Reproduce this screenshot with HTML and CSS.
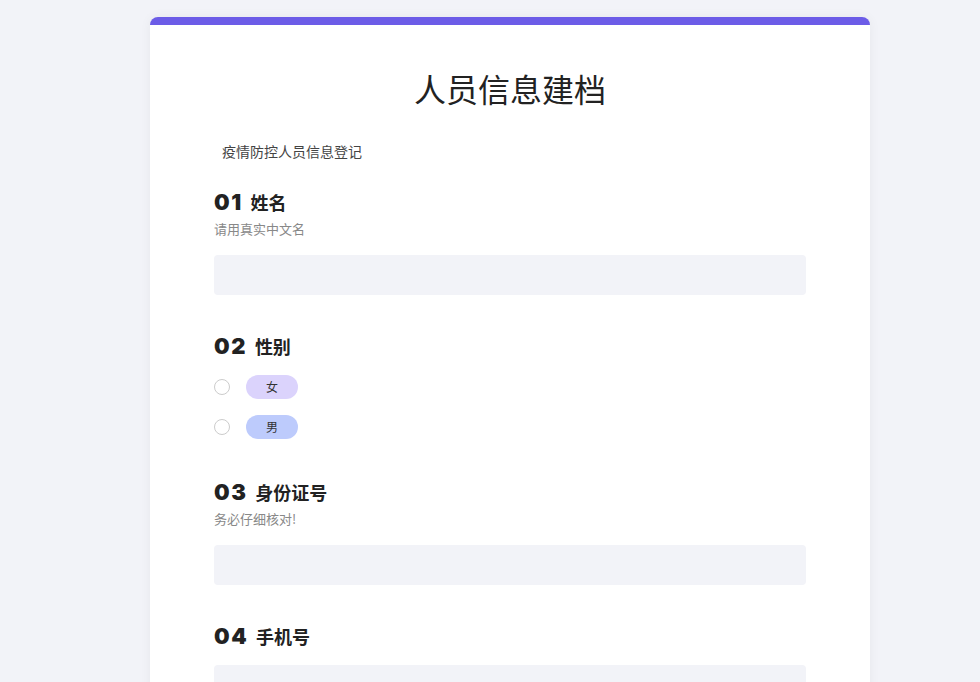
FILE: index.html
```html
<!DOCTYPE html>
<html>
<head>
    <title>人员信息建档</title>
    <meta charset="UTF-8">
    <meta name="viewport" content="width=device-width, initial-scale=1.0">
    <link rel="stylesheet" href="styles.css">
</head>
<body>
    <div class="page">
        <div class="card">
            <h1>人员信息建档</h1>
            <p class="intro">疫情防控人员信息登记</p>

            <div class="question">
                <div class="q-title"><span class="q-num">01</span><span class="q-label">姓名</span></div>
                <div class="q-desc">请用真实中文名</div>
                <input class="q-input" type="text">
            </div>

            <div class="question">
                <div class="q-title"><span class="q-num">02</span><span class="q-label">性别</span></div>
                <div class="options">
                    <label class="option">
                        <span class="radio"></span>
                        <span class="pill pill-female">女</span>
                    </label>
                    <label class="option">
                        <span class="radio"></span>
                        <span class="pill pill-male">男</span>
                    </label>
                </div>
            </div>

            <div class="question">
                <div class="q-title"><span class="q-num">03</span><span class="q-label">身份证号</span></div>
                <div class="q-desc">务必仔细核对!</div>
                <input class="q-input" type="text">
            </div>

            <div class="question">
                <div class="q-title"><span class="q-num">04</span><span class="q-label">手机号</span></div>
                <input class="q-input" type="text">
            </div>
        </div>
    </div>
</body>
</html>
```

FILE: styles.css
```css
body {
    margin: 0;
    background: #f2f3f8;
    font-family: "Noto Sans CJK SC", "Noto Sans", sans-serif;
    color: #222;
    overflow: hidden;
}
.page {
    display: flex;
    justify-content: center;
    padding: 17px 0 0 40px;
}
.card {
    width: 720px;
    box-sizing: border-box;
    background: #fff;
    border-top: 8px solid #6c5ce7;
    border-radius: 8px 8px 0 0;
    box-shadow: 0 0 12px rgba(0, 0, 0, 0.05);
    padding: 41px 64px 40px;
    min-height: 700px;
}
h1 {
    margin: 0;
    font-size: 32px;
    line-height: 44px;
    font-weight: 400;
    text-align: center;
    color: #222;
}
.intro {
    margin: 31px 0 26px 8px;
    font-size: 14px;
    line-height: 20px;
    color: #444;
}
.question {
    margin-bottom: 36px;
}
.q-title {
    display: flex;
    align-items: center;
    height: 30px;
}
.q-num {
    font-family: Inter, "Noto Sans", sans-serif;
    font-weight: 900;
    font-size: 22px;
    letter-spacing: 1.5px;
    color: #222;
    margin-right: 8px;
}
.q-label {
    font-size: 18px;
    font-weight: 700;
    color: #222;
}
.q-desc {
    margin-top: 2px;
    font-size: 13px;
    line-height: 20px;
    color: #888;
}
.q-input {
    display: block;
    width: 100%;
    height: 40px;
    box-sizing: border-box;
    margin-top: 14px;
    border: none;
    border-radius: 4px;
    background: #f2f3f8;
    outline: none;
}
.q-desc + .q-input {
    margin-top: 16px;
}
.options {
    display: flex;
    flex-direction: column;
    gap: 16px;
    margin-top: 14px;
    padding-bottom: 2px;
}
.option {
    display: flex;
    align-items: center;
    height: 24px;
}
.radio {
    width: 16px;
    height: 16px;
    box-sizing: border-box;
    border: 1px solid #ccc;
    border-radius: 50%;
    background: #fff;
    margin-right: 16px;
}
.pill {
    width: 52px;
    height: 24px;
    line-height: 24px;
    border-radius: 12px;
    text-align: center;
    font-size: 12px;
    color: #333;
}
.pill-female {
    background: #dbd3fc;
}
.pill-male {
    background: #bdcbfc;
}
```
